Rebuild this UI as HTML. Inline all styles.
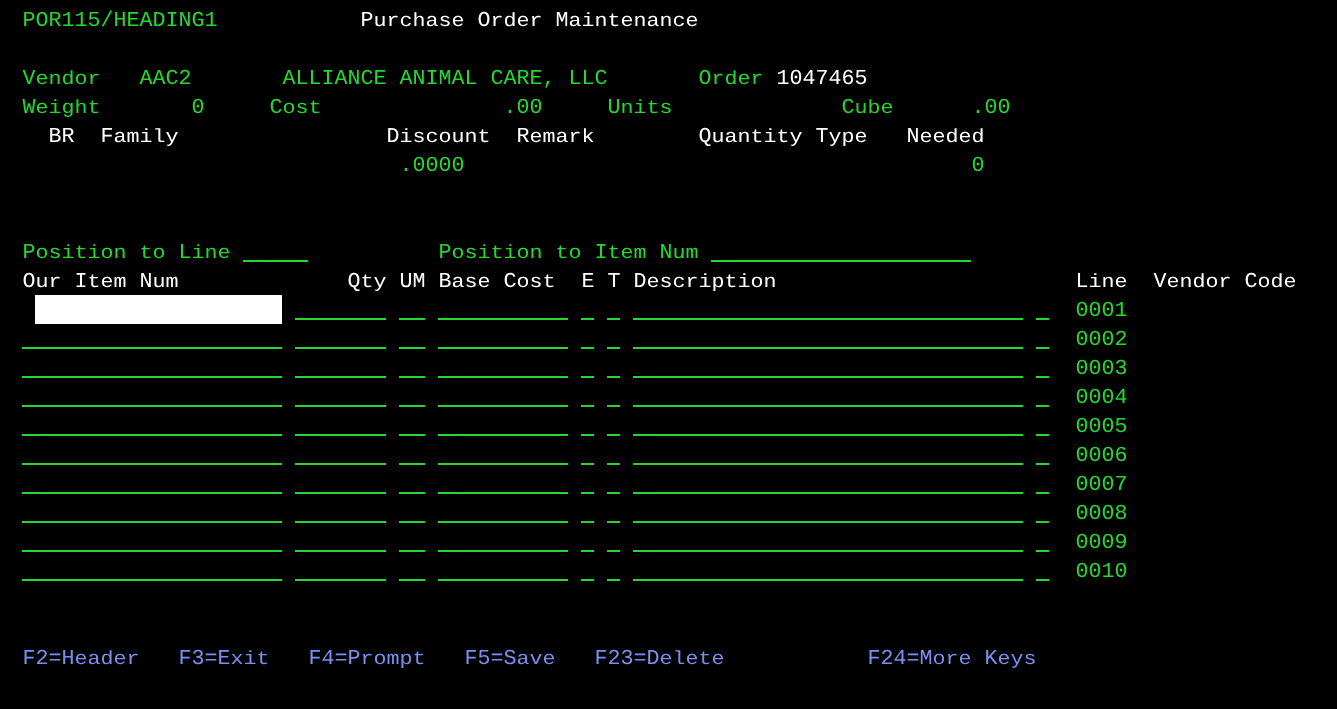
<!DOCTYPE html>
<html><head><meta charset="utf-8"><title>Purchase Order Maintenance</title>
<style>
html,body{margin:0;padding:0;background:#000;}
body{width:1337px;height:709px;overflow:hidden;position:relative;}
#scr{position:absolute;left:0;top:0;width:1337px;height:709px;background:#000;overflow:hidden;font-family:"Liberation Mono",monospace;font-size:21.67px;line-height:29px;}
.t{position:absolute;white-space:pre;height:29px;margin-top:0.7px;text-rendering:geometricPrecision;transform:scaleY(0.98);transform-origin:0 20.3px;}
.l{transform:scaleY(0.875);}
.g{color:#24d830}.w{color:#ffffff}.b{color:#7890f0}
.u{position:absolute;height:2px;background:#24d830;}
.in{position:absolute;background:#fff;}
#tx{position:absolute;left:0;top:0;width:1337px;height:709px;will-change:transform;}
</style></head><body><div id="scr"><div id="tx">
<span class="t g" style="left:22.5px;top:5px">POR115/HEADING1</span>
<span class="t w" style="left:360.5px;top:5px">P</span>
<span class="t w l" style="left:373.5px;top:5px">urchase</span>
<span class="t w" style="left:477.5px;top:5px">O</span>
<span class="t w l" style="left:490.5px;top:5px">rder</span>
<span class="t w" style="left:555.5px;top:5px">M</span>
<span class="t w l" style="left:568.5px;top:5px">aintenance</span>
<span class="t g" style="left:22.5px;top:63px">V</span>
<span class="t g l" style="left:35.5px;top:63px">endor</span>
<span class="t g" style="left:139.5px;top:63px">AAC2</span>
<span class="t g" style="left:282.5px;top:63px">ALLIANCE</span>
<span class="t g" style="left:399.5px;top:63px">ANIMAL</span>
<span class="t g" style="left:490.5px;top:63px">CARE,</span>
<span class="t g" style="left:568.5px;top:63px">LLC</span>
<span class="t g" style="left:698.5px;top:63px">O</span>
<span class="t g l" style="left:711.5px;top:63px">rder</span>
<span class="t w" style="left:776.5px;top:63px">1047465</span>
<span class="t g" style="left:22.5px;top:92px">W</span>
<span class="t g l" style="left:35.5px;top:92px">eight</span>
<span class="t g" style="left:191.5px;top:92px">0</span>
<span class="t g" style="left:269.5px;top:92px">C</span>
<span class="t g l" style="left:282.5px;top:92px">ost</span>
<span class="t g" style="left:503.5px;top:92px">.00</span>
<span class="t g" style="left:607.5px;top:92px">U</span>
<span class="t g l" style="left:620.5px;top:92px">nits</span>
<span class="t g" style="left:841.5px;top:92px">C</span>
<span class="t g l" style="left:854.5px;top:92px">ube</span>
<span class="t g" style="left:971.5px;top:92px">.00</span>
<span class="t w" style="left:48.5px;top:121px">BR</span>
<span class="t w" style="left:100.5px;top:121px">F</span>
<span class="t w l" style="left:113.5px;top:121px">amily</span>
<span class="t w" style="left:386.5px;top:121px">D</span>
<span class="t w l" style="left:399.5px;top:121px">iscount</span>
<span class="t w" style="left:516.5px;top:121px">R</span>
<span class="t w l" style="left:529.5px;top:121px">emark</span>
<span class="t w" style="left:698.5px;top:121px">Q</span>
<span class="t w l" style="left:711.5px;top:121px">uantity</span>
<span class="t w" style="left:815.5px;top:121px">T</span>
<span class="t w l" style="left:828.5px;top:121px">ype</span>
<span class="t w" style="left:906.5px;top:121px">N</span>
<span class="t w l" style="left:919.5px;top:121px">eeded</span>
<span class="t g" style="left:399.5px;top:150px">.0000</span>
<span class="t g" style="left:971.5px;top:150px">0</span>
<span class="t g" style="left:22.5px;top:237px">P</span>
<span class="t g l" style="left:35.5px;top:237px">osition</span>
<span class="t g l" style="left:139.5px;top:237px">to</span>
<span class="t g" style="left:178.5px;top:237px">L</span>
<span class="t g l" style="left:191.5px;top:237px">ine</span>
<span class="t g" style="left:438.5px;top:237px">P</span>
<span class="t g l" style="left:451.5px;top:237px">osition</span>
<span class="t g l" style="left:555.5px;top:237px">to</span>
<span class="t g" style="left:594.5px;top:237px">I</span>
<span class="t g l" style="left:607.5px;top:237px">tem</span>
<span class="t g" style="left:659.5px;top:237px">N</span>
<span class="t g l" style="left:672.5px;top:237px">um</span>
<span class="t w" style="left:22.5px;top:266px">O</span>
<span class="t w l" style="left:35.5px;top:266px">ur</span>
<span class="t w" style="left:74.5px;top:266px">I</span>
<span class="t w l" style="left:87.5px;top:266px">tem</span>
<span class="t w" style="left:139.5px;top:266px">N</span>
<span class="t w l" style="left:152.5px;top:266px">um</span>
<span class="t w" style="left:347.5px;top:266px">Q</span>
<span class="t w l" style="left:360.5px;top:266px">ty</span>
<span class="t w" style="left:399.5px;top:266px">UM</span>
<span class="t w" style="left:438.5px;top:266px">B</span>
<span class="t w l" style="left:451.5px;top:266px">ase</span>
<span class="t w" style="left:503.5px;top:266px">C</span>
<span class="t w l" style="left:516.5px;top:266px">ost</span>
<span class="t w" style="left:581.5px;top:266px">E</span>
<span class="t w" style="left:607.5px;top:266px">T</span>
<span class="t w" style="left:633.5px;top:266px">D</span>
<span class="t w l" style="left:646.5px;top:266px">escription</span>
<span class="t w" style="left:1075.5px;top:266px">L</span>
<span class="t w l" style="left:1088.5px;top:266px">ine</span>
<span class="t w" style="left:1153.5px;top:266px">V</span>
<span class="t w l" style="left:1166.5px;top:266px">endor</span>
<span class="t w" style="left:1244.5px;top:266px">C</span>
<span class="t w l" style="left:1257.5px;top:266px">ode</span>
<span class="t b" style="left:22.5px;top:643px">F2=H</span>
<span class="t b l" style="left:74.5px;top:643px">eader</span>
<span class="t b" style="left:178.5px;top:643px">F3=E</span>
<span class="t b l" style="left:230.5px;top:643px">xit</span>
<span class="t b" style="left:308.5px;top:643px">F4=P</span>
<span class="t b l" style="left:360.5px;top:643px">rompt</span>
<span class="t b" style="left:464.5px;top:643px">F5=S</span>
<span class="t b l" style="left:516.5px;top:643px">ave</span>
<span class="t b" style="left:594.5px;top:643px">F23=D</span>
<span class="t b l" style="left:659.5px;top:643px">elete</span>
<span class="t b" style="left:867.5px;top:643px">F24=M</span>
<span class="t b l" style="left:932.5px;top:643px">ore</span>
<span class="t b" style="left:984.5px;top:643px">K</span>
<span class="t b l" style="left:997.5px;top:643px">eys</span>
<span class="t g" style="left:1075.5px;top:295px">0001</span>
<span class="t g" style="left:1075.5px;top:324px">0002</span>
<span class="t g" style="left:1075.5px;top:353px">0003</span>
<span class="t g" style="left:1075.5px;top:382px">0004</span>
<span class="t g" style="left:1075.5px;top:411px">0005</span>
<span class="t g" style="left:1075.5px;top:440px">0006</span>
<span class="t g" style="left:1075.5px;top:469px">0007</span>
<span class="t g" style="left:1075.5px;top:498px">0008</span>
<span class="t g" style="left:1075.5px;top:527px">0009</span>
<span class="t g" style="left:1075.5px;top:556px">0010</span>
</div>
<div class="u" style="left:243px;top:260px;width:65px"></div>
<div class="u" style="left:711px;top:260px;width:260px"></div>
<div class="u" style="left:295px;top:318px;width:91px"></div>
<div class="u" style="left:399px;top:318px;width:26px"></div>
<div class="u" style="left:438px;top:318px;width:130px"></div>
<div class="u" style="left:581px;top:318px;width:13px"></div>
<div class="u" style="left:607px;top:318px;width:13px"></div>
<div class="u" style="left:633px;top:318px;width:390px"></div>
<div class="u" style="left:1036px;top:318px;width:13px"></div>
<div class="u" style="left:22px;top:347px;width:260px"></div>
<div class="u" style="left:295px;top:347px;width:91px"></div>
<div class="u" style="left:399px;top:347px;width:26px"></div>
<div class="u" style="left:438px;top:347px;width:130px"></div>
<div class="u" style="left:581px;top:347px;width:13px"></div>
<div class="u" style="left:607px;top:347px;width:13px"></div>
<div class="u" style="left:633px;top:347px;width:390px"></div>
<div class="u" style="left:1036px;top:347px;width:13px"></div>
<div class="u" style="left:22px;top:376px;width:260px"></div>
<div class="u" style="left:295px;top:376px;width:91px"></div>
<div class="u" style="left:399px;top:376px;width:26px"></div>
<div class="u" style="left:438px;top:376px;width:130px"></div>
<div class="u" style="left:581px;top:376px;width:13px"></div>
<div class="u" style="left:607px;top:376px;width:13px"></div>
<div class="u" style="left:633px;top:376px;width:390px"></div>
<div class="u" style="left:1036px;top:376px;width:13px"></div>
<div class="u" style="left:22px;top:405px;width:260px"></div>
<div class="u" style="left:295px;top:405px;width:91px"></div>
<div class="u" style="left:399px;top:405px;width:26px"></div>
<div class="u" style="left:438px;top:405px;width:130px"></div>
<div class="u" style="left:581px;top:405px;width:13px"></div>
<div class="u" style="left:607px;top:405px;width:13px"></div>
<div class="u" style="left:633px;top:405px;width:390px"></div>
<div class="u" style="left:1036px;top:405px;width:13px"></div>
<div class="u" style="left:22px;top:434px;width:260px"></div>
<div class="u" style="left:295px;top:434px;width:91px"></div>
<div class="u" style="left:399px;top:434px;width:26px"></div>
<div class="u" style="left:438px;top:434px;width:130px"></div>
<div class="u" style="left:581px;top:434px;width:13px"></div>
<div class="u" style="left:607px;top:434px;width:13px"></div>
<div class="u" style="left:633px;top:434px;width:390px"></div>
<div class="u" style="left:1036px;top:434px;width:13px"></div>
<div class="u" style="left:22px;top:463px;width:260px"></div>
<div class="u" style="left:295px;top:463px;width:91px"></div>
<div class="u" style="left:399px;top:463px;width:26px"></div>
<div class="u" style="left:438px;top:463px;width:130px"></div>
<div class="u" style="left:581px;top:463px;width:13px"></div>
<div class="u" style="left:607px;top:463px;width:13px"></div>
<div class="u" style="left:633px;top:463px;width:390px"></div>
<div class="u" style="left:1036px;top:463px;width:13px"></div>
<div class="u" style="left:22px;top:492px;width:260px"></div>
<div class="u" style="left:295px;top:492px;width:91px"></div>
<div class="u" style="left:399px;top:492px;width:26px"></div>
<div class="u" style="left:438px;top:492px;width:130px"></div>
<div class="u" style="left:581px;top:492px;width:13px"></div>
<div class="u" style="left:607px;top:492px;width:13px"></div>
<div class="u" style="left:633px;top:492px;width:390px"></div>
<div class="u" style="left:1036px;top:492px;width:13px"></div>
<div class="u" style="left:22px;top:521px;width:260px"></div>
<div class="u" style="left:295px;top:521px;width:91px"></div>
<div class="u" style="left:399px;top:521px;width:26px"></div>
<div class="u" style="left:438px;top:521px;width:130px"></div>
<div class="u" style="left:581px;top:521px;width:13px"></div>
<div class="u" style="left:607px;top:521px;width:13px"></div>
<div class="u" style="left:633px;top:521px;width:390px"></div>
<div class="u" style="left:1036px;top:521px;width:13px"></div>
<div class="u" style="left:22px;top:550px;width:260px"></div>
<div class="u" style="left:295px;top:550px;width:91px"></div>
<div class="u" style="left:399px;top:550px;width:26px"></div>
<div class="u" style="left:438px;top:550px;width:130px"></div>
<div class="u" style="left:581px;top:550px;width:13px"></div>
<div class="u" style="left:607px;top:550px;width:13px"></div>
<div class="u" style="left:633px;top:550px;width:390px"></div>
<div class="u" style="left:1036px;top:550px;width:13px"></div>
<div class="u" style="left:22px;top:579px;width:260px"></div>
<div class="u" style="left:295px;top:579px;width:91px"></div>
<div class="u" style="left:399px;top:579px;width:26px"></div>
<div class="u" style="left:438px;top:579px;width:130px"></div>
<div class="u" style="left:581px;top:579px;width:13px"></div>
<div class="u" style="left:607px;top:579px;width:13px"></div>
<div class="u" style="left:633px;top:579px;width:390px"></div>
<div class="u" style="left:1036px;top:579px;width:13px"></div>
<div class="in" style="left:35px;top:295px;width:247px;height:29px"></div>
</div></body></html>
